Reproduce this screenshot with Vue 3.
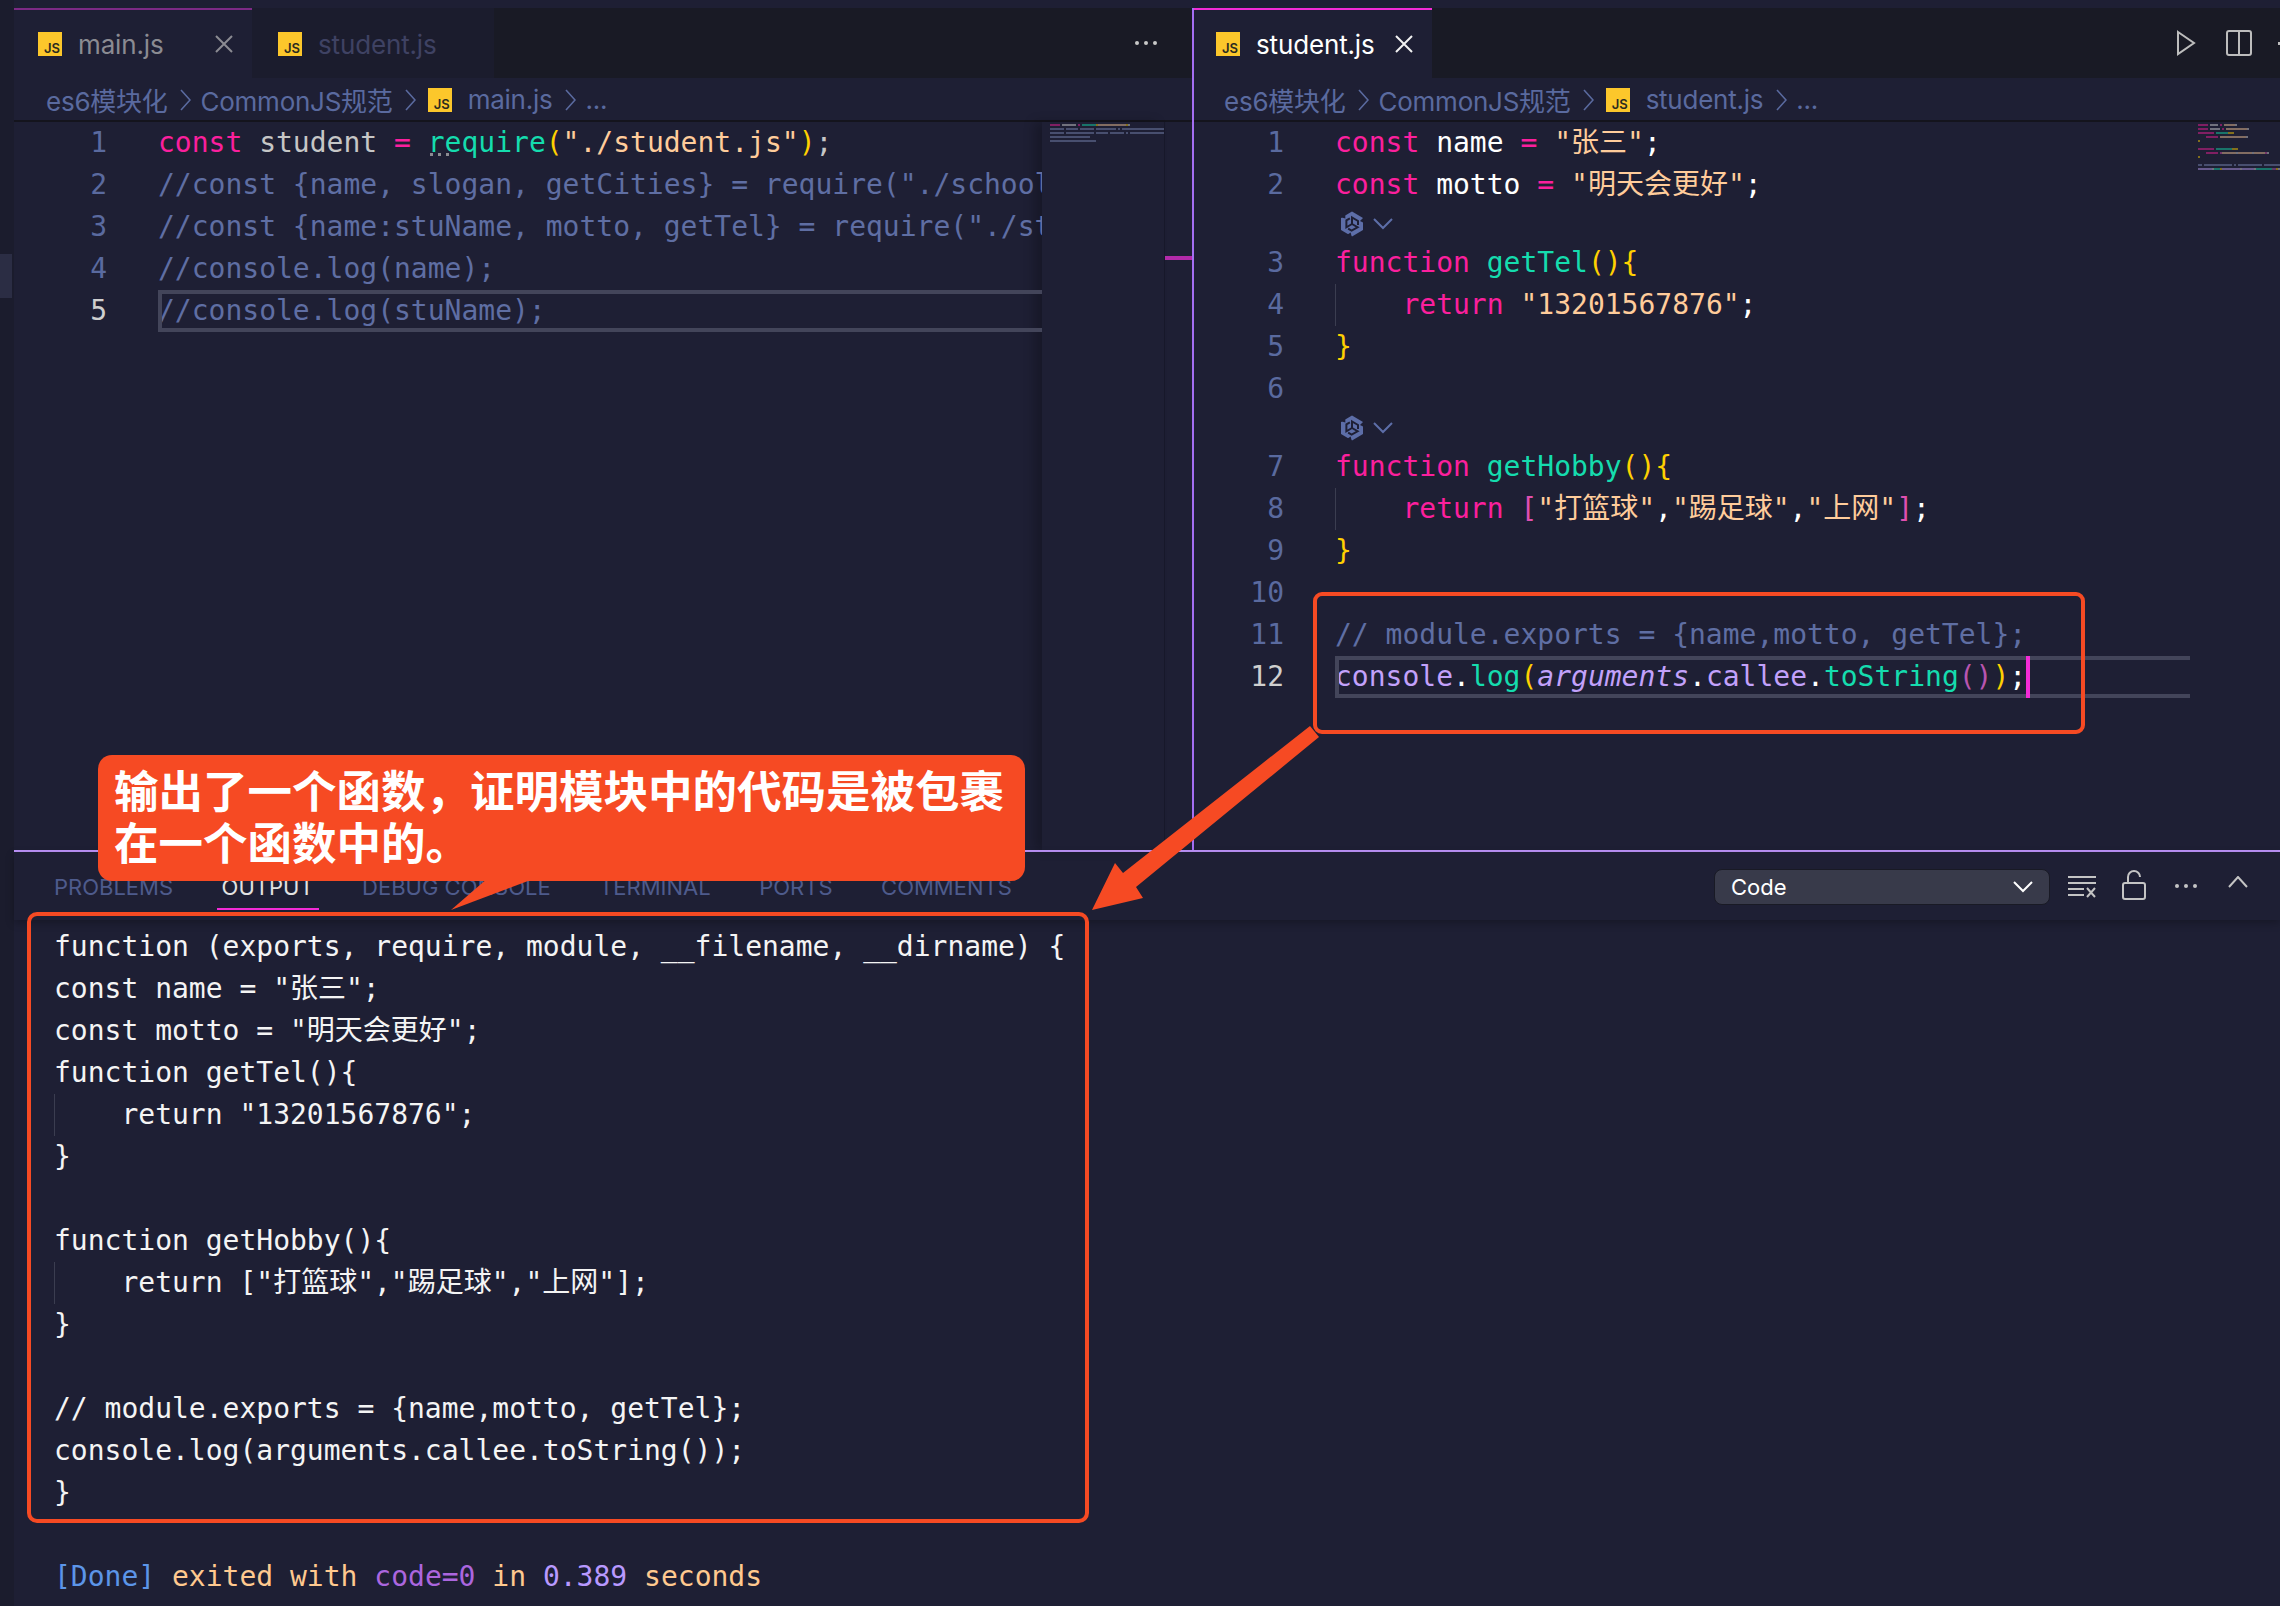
<script setup>
const L = (n, tokens, extra = {}) => ({ n, tokens, ...extra })
const lens = { lens: true }

const groups = [
  {
    key: 'left',
    tabs: [
      { name: 'main.js', state: 'dim-active', close: true },
      { name: 'student.js', state: 'inactive', close: false },
    ],
    file: 'main.js',
    lines: [
      L(1, [['kw', 'const'], ['idd', ' student '], ['kw', '='], ['idd', ' '], ['fn hint', 'require'], ['br', '('], ['str', '"./student.js"'], ['br', ')'], ['idd', ';']]),
      L(2, [['cm', '//const {name, slogan, getCities} = require("./school.js");']]),
      L(3, [['cm', '//const {name:stuName, motto, getTel} = require("./student.js");']]),
      L(4, [['cm', '//console.log(name);']]),
      L(5, [['cm', '//console.log(stuName);']], { cur: true }),
    ],
  },
  {
    key: 'right',
    tabs: [{ name: 'student.js', state: 'active', close: true }],
    file: 'student.js',
    lines: [
      L(1, [['kw', 'const'], ['id', ' name '], ['kw', '='], ['id', ' '], ['str', '"张三"'], ['id', ';']]),
      L(2, [['kw', 'const'], ['id', ' motto '], ['kw', '='], ['id', ' '], ['str', '"明天会更好"'], ['id', ';']]),
      lens,
      L(3, [['kw', 'function'], ['id', ' '], ['fn', 'getTel'], ['br', '()'], ['br', '{']]),
      L(4, [['id', '    '], ['kw', 'return'], ['id', ' '], ['str', '"13201567876"'], ['id', ';']], { guide: true }),
      L(5, [['br', '}']]),
      L(6, []),
      lens,
      L(7, [['kw', 'function'], ['id', ' '], ['fn', 'getHobby'], ['br', '()'], ['br', '{']]),
      L(8, [['id', '    '], ['kw', 'return'], ['id', ' '], ['br2', '['], ['str', '"打篮球"'], ['id', ','], ['str', '"踢足球"'], ['id', ','], ['str', '"上网"'], ['br2', ']'], ['id', ';']], { guide: true }),
      L(9, [['br', '}']]),
      L(10, []),
      L(11, [['cm', '// module.exports = {name,motto, getTel};']]),
      L(12, [['prop', 'console'], ['id', '.'], ['fn', 'log'], ['br', '('], ['prop it', 'arguments'], ['id', '.'], ['prop', 'callee'], ['id', '.'], ['fn', 'toString'], ['par', '()'], ['br', ')'], ['id', ';']], { cur: true, caret: true }),
    ],
  },
]

const bars = (tokens) =>
  tokens.flatMap(([cls, text]) =>
    text.split(/(\s+)/).filter(Boolean).map((part) => ({
      cls: /^\s+$/.test(part) ? 'gap' : cls.split(' ')[0],
      width: [...part].reduce((sum, ch) => sum + (ch.charCodeAt(0) > 255 ? 3.4 : 2), 0),
    })),
  )

const miniLines = (lines) => lines.filter((l) => !l.lens).map((l) => ({ n: l.n, bars: bars(l.tokens) }))

const outputLines = [
  { text: 'function (exports, require, module, __filename, __dirname) {' },
  { text: 'const name = "张三";' },
  { text: 'const motto = "明天会更好";' },
  { text: 'function getTel(){' },
  { text: '    return "13201567876";', guide: true },
  { text: '}' },
  { text: '' },
  { text: 'function getHobby(){' },
  { text: '    return ["打篮球","踢足球","上网"];', guide: true },
  { text: '}' },
  { text: '' },
  { text: '// module.exports = {name,motto, getTel};' },
  { text: 'console.log(arguments.callee.toString());' },
  { text: '}' },
  { text: '' },
]

const panelTabs = ['Problems', 'Output', 'Debug Console', 'Terminal', 'Ports', 'Comments']
</script>

<template>
  <div class="app">
    <aside class="activity"><span class="activity-mark"></span></aside>

    <div class="main">
      <div class="editors">
        <section v-for="g in groups" :key="g.key" class="group" :class="'group-' + g.key">
          <div class="tabbar">
            <div v-for="t in g.tabs" :key="t.name" class="tab" :class="'tab-' + t.state">
              <span class="js"><b>JS</b></span>
              <span class="tab-name">{{ t.name }}</span>
              <svg v-if="t.close" class="tab-close" viewBox="0 0 20 20" width="20" height="20">
                <path d="M2 2 18 18M18 2 2 18" fill="none" stroke="currentColor" stroke-width="2" />
              </svg>
            </div>
            <div class="tab-actions">
              <template v-if="g.key === 'left'">
                <svg viewBox="0 0 24 6" width="24" height="6"><circle cx="3" cy="3" r="2" /><circle cx="12" cy="3" r="2" /><circle cx="21" cy="3" r="2" /></svg>
              </template>
              <template v-else>
                <svg class="act-play" viewBox="0 0 20 26" width="20" height="26">
                  <path d="M2 2 18 13 2 24Z" fill="none" stroke="#bdbdbd" stroke-width="2" />
                </svg>
                <svg class="act-split" viewBox="0 0 26 26" width="26" height="26">
                  <rect x="1" y="1" width="24" height="24" rx="2" fill="none" stroke="#bdbdbd" stroke-width="2" />
                  <path d="M13 1V25" stroke="#bdbdbd" stroke-width="2" />
                </svg>
                <span class="act-cut"></span>
              </template>
            </div>
          </div>

          <div class="crumbs">
            <span>es6模块化</span>
            <svg class="chev" viewBox="0 0 11 22" width="11" height="22"><path d="M1 1 10 11 1 21" fill="none" stroke="currentColor" stroke-width="1.6" /></svg>
            <span>CommonJS规范</span>
            <svg class="chev" viewBox="0 0 11 22" width="11" height="22"><path d="M1 1 10 11 1 21" fill="none" stroke="currentColor" stroke-width="1.6" /></svg>
            <span class="js js-crumb"><b>JS</b></span>
            <span>{{ g.file }}</span>
            <svg class="chev" viewBox="0 0 11 22" width="11" height="22"><path d="M1 1 10 11 1 21" fill="none" stroke="currentColor" stroke-width="1.6" /></svg>
            <span>...</span>
          </div>

          <div class="editor">
            <div class="code-col">
              <template v-for="(line, i) in g.lines" :key="i">
                <div v-if="line.lens" class="lens-row">
                  <svg viewBox="0 0 26 26" width="26" height="26" class="lens-icon">
                    <path d="M13 0.5 24 7 24 19 13 25.5 2 19 2 7Z" fill="#5d6ea8" />
                    <g fill="none" stroke="#1e1f34" stroke-width="2">
                      <path d="M13 14V6.5L19 10V14" />
                      <path d="M13 14V6.5L19 10V14" transform="rotate(120 13 13)" />
                      <path d="M13 14V6.5L19 10V14" transform="rotate(240 13 13)" />
                    </g>
                    <g fill="#1e1f34">
                      <path d="M24.5 6.5 25 12 21 10Z" />
                      <path d="M24.5 6.5 25 12 21 10Z" transform="rotate(120 13 13)" />
                      <path d="M24.5 6.5 25 12 21 10Z" transform="rotate(240 13 13)" />
                    </g>
                  </svg>
                  <svg viewBox="0 0 20 12" width="20" height="12" class="lens-chev">
                    <path d="M1 1 10 10 19 1" fill="none" stroke="#5d6ea8" stroke-width="2" />
                  </svg>
                </div>
                <div v-else class="line" :class="{ cur: line.cur, guide: line.guide }">
                  <span class="num">{{ line.n }}</span>
                  <span class="code"><span v-for="(tok, j) in line.tokens" :key="j" :class="tok[0]">{{ tok[1] }}</span><i v-if="line.caret" class="caret"></i></span>
                </div>
              </template>
            </div>
            <div class="minimap">
              <div v-for="m in miniLines(g.lines)" :key="m.n" class="mini-line">
                <span v-for="(b, k) in m.bars" :key="k" class="mini-bar" :class="'m-' + b.cls" :style="{ width: b.width + 'px' }"></span>
              </div>
            </div>
            <div v-if="g.key === 'left'" class="scrolltrack"><span class="scrollmark"></span></div>
          </div>
        </section>
      </div>

      <section class="panel">
        <header class="panel-head">
          <div v-for="p in panelTabs" :key="p" class="ptab" :class="{ 'ptab-on': p === 'Output' }">{{ p }}</div>
          <div class="panel-actions">
            <div class="select">
              <span>Code</span>
              <svg viewBox="0 0 20 12" width="20" height="12"><path d="M1 1 10 10 19 1" fill="none" stroke="#fff" stroke-width="2" /></svg>
            </div>
            <svg class="pa-clear" viewBox="0 0 28 22" width="28" height="22">
              <path d="M0 1H28M0 7H28M0 13H16M0 19H16" stroke="#c4c4c4" stroke-width="2" />
              <path d="M19 12 27 21M27 12 19 21" stroke="#c4c4c4" stroke-width="2" />
            </svg>
            <svg class="pa-lock" viewBox="0 0 24 30" width="24" height="30">
              <rect x="1" y="13" width="22" height="16" rx="2" fill="none" stroke="#c4c4c4" stroke-width="2" />
              <path d="M6 13V7a6 6 0 0 1 12 0" fill="none" stroke="#c4c4c4" stroke-width="2" />
            </svg>
            <svg class="pa-dots" viewBox="0 0 24 6" width="24" height="6"><circle cx="3" cy="3" r="2" /><circle cx="12" cy="3" r="2" /><circle cx="21" cy="3" r="2" /></svg>
            <svg class="pa-up" viewBox="0 0 20 12" width="20" height="12"><path d="M1 11 10 1 19 11" fill="none" stroke="#c4c4c4" stroke-width="2" /></svg>
          </div>
        </header>
        <div class="output">
          <div v-for="(o, i) in outputLines" :key="i" class="out-line" :class="{ guide: o.guide }">{{ o.text }}</div>
          <div class="out-line"><span class="d-blue">[Done]</span><span class="d-peach"> exited with </span><span class="d-purple">code=0</span><span class="d-peach"> in </span><span class="d-lilac">0.389</span><span class="d-peach"> seconds</span></div>
        </div>
      </section>
    </div>

    <div class="overlay">
      <svg class="overlay-svg" viewBox="0 0 2280 1606" width="2280" height="1606">
        <rect x="1315" y="594" width="768" height="138" rx="7" fill="none" stroke="#f64a23" stroke-width="4" />
        <rect x="29" y="914" width="1058" height="607" rx="8" fill="none" stroke="#f64a23" stroke-width="4" />
        <polygon fill="#f64a23" points="1092,910 1115,863 1123,873 1310,726 1319,737 1136,887 1143,898" />
        <polygon fill="#f64a23" points="488,878 536,878 451,910" />
      </svg>
      <div class="callout">输出了一个函数，证明模块中的代码是被包裹在一个函数中的。</div>
    </div>
  </div>
</template>

<style scoped>
.app {
  position: relative;
  width: 2280px;
  height: 1606px;
  display: flex;
  overflow: hidden;
  background: #1e1f34;
  font-family: Inter, "Noto Sans CJK SC", sans-serif;
}
.activity {
  position: relative;
  width: 14px;
  flex: none;
  background: #1b1c2d;
}
.activity-mark {
  position: absolute;
  left: 0;
  top: 254px;
  width: 12px;
  height: 44px;
  background: #2b2d44;
}
.main {
  flex: 1;
  min-width: 0;
  display: flex;
  flex-direction: column;
}
.editors {
  height: 850px;
  flex: none;
  display: flex;
  padding-top: 8px;
  box-sizing: border-box;
}
.group {
  display: flex;
  flex-direction: column;
  min-width: 0;
}
.group-left {
  width: 1178px;
}
.group-right {
  flex: 1;
  border-left: 2px solid #a46ef2;
}

/* tabs */
.tabbar {
  height: 70px;
  flex: none;
  display: flex;
  background: #191a25;
}
.tab {
  display: flex;
  align-items: center;
  box-sizing: border-box;
  border-top: 2px solid transparent;
  font-size: 26px;
  letter-spacing: -0.15px;
  position: relative;
}
.tab-dim-active {
  width: 238px;
  padding-left: 24px;
  background: #1e1f34;
  border-top-color: #7d2a86;
  color: #8b8b92;
}
.tab-inactive {
  width: 242px;
  padding-left: 26px;
  background: #1b1c2d;
  color: #3f4263;
}
.tab-active {
  width: 238px;
  padding-left: 22px;
  background: #1e1f34;
  border-top-color: #f32bd6;
  color: #fff;
}
.tab-name {
  margin-left: 16px;
}
.tab-close {
  position: absolute;
  top: 24px;
}
.tab-dim-active .tab-close {
  left: 200px;
}
.tab-active .tab-close {
  left: 200px;
  color: #f2f2f2;
}
.js {
  width: 24px;
  height: 24px;
  flex: none;
  background: #fcc72b;
  display: flex;
  align-items: flex-end;
  justify-content: flex-end;
  padding: 0 2px 0 0;
  box-sizing: border-box;
  letter-spacing: 0;
}
.js b {
  font-size: 13px;
  line-height: 15px;
  font-weight: 600;
  color: #2a2a20;
}
.tab-actions {
  margin-left: auto;
  display: flex;
  align-items: center;
  fill: #c8c8c8;
}
.group-left .tab-actions {
  padding-right: 34px;
}
.act-play {
  margin-right: 30px;
}
.act-split {
  margin-right: 26px;
}
.act-cut {
  width: 2px;
  height: 3px;
  background: #bdbdbd;
}

/* breadcrumbs */
.crumbs {
  height: 44px;
  flex: none;
  box-sizing: border-box;
  border-bottom: 2px solid #14141d;
  padding-top: 1px;
  display: flex;
  align-items: center;
  font-size: 26px;
  letter-spacing: -0.25px;
  color: #5a6a9f;
  white-space: nowrap;
}
.group-left .crumbs {
  padding-left: 32px;
}
.group-right .crumbs {
  padding-left: 30px;
}
.chev {
  margin: 0 9.5px 0 12.5px;
  flex: none;
}
.js-crumb {
  margin: 0 16px 0 2px;
}

/* editor */
.editor {
  flex: 1;
  min-height: 0;
  display: flex;
  font-family: "DejaVu Sans Mono", "Noto Sans CJK SC", monospace;
  font-size: 28px;
}
.code-col {
  flex: 1;
  min-width: 0;
  overflow: hidden;
}
.line {
  position: relative;
  height: 42px;
  line-height: 42px;
  display: flex;
  white-space: pre;
}
.num {
  flex: none;
  box-sizing: border-box;
  text-align: right;
  color: #5a6a9f;
}
.group-left .num {
  width: 144px;
  padding-right: 51px;
}
.group-right .num {
  width: 141px;
  padding-right: 51px;
}
.code {
  position: relative;
  flex: 1;
  min-width: 0;
}
.line.cur .num {
  color: #cfcfcf;
}
.line.cur .code::before {
  content: "";
  position: absolute;
  inset: 0;
  box-sizing: border-box;
  border: solid #43455a;
  border-width: 4px 0 4px 4px;
}
.line.guide .code::after {
  content: "";
  position: absolute;
  left: 0;
  top: 0;
  bottom: 0;
  width: 1px;
  background: #3b3d50;
}
.lens-row {
  height: 36px;
  display: flex;
  align-items: center;
  padding-left: 145px;
}
.lens-chev {
  margin-left: 8px;
}
.kw { color: #fb1f9d; }
.id { color: #ffffff; }
.idd { color: #c6c6c6; }
.fn { color: #15dcae; }
.str { color: #ffcc9b; }
.br { color: #ffd000; }
.br2 { color: #e04fb0; }
.cm { color: #5f6ea3; }
.prop { color: #c2a1fb; }
.it { font-style: italic; }
.par { color: #b855b0; }
.hint {
  position: relative;
}
.hint::after {
  content: "";
  position: absolute;
  left: 2px;
  bottom: 3px;
  width: 21px;
  height: 3px;
  background: repeating-linear-gradient(90deg, #8b8b92 0 3px, transparent 3px 8px);
}
.caret {
  position: absolute;
  top: 0;
  width: 4px;
  height: 42px;
  background: #f32bd6;
}

/* minimap */
.minimap {
  flex: none;
  overflow: hidden;
  padding-top: 1px;
  box-sizing: border-box;
}
.group-left .minimap {
  width: 122px;
  padding-left: 8px;
  box-shadow: -8px 0 10px rgba(0, 0, 0, 0.22);
}
.group-right .minimap {
  width: 90px;
  padding-left: 8px;
}
.mini-line {
  height: 4px;
  display: flex;
  white-space: nowrap;
}
.mini-bar {
  flex: none;
  height: 2px;
  margin-top: 1px;
  opacity: 0.45;
}
.m-gap { background: transparent; }
.m-kw { background: #fb1f9d; }
.m-id, .m-idd { background: #d8d8d8; }
.m-fn { background: #15dcae; }
.m-str { background: #ffcc9b; }
.m-br { background: #ffd000; }
.m-br2 { background: #e04fb0; }
.m-cm { background: #7c8ab8; }
.m-prop { background: #c2a1fb; }
.m-par { background: #b855b0; }
.scrolltrack {
  position: relative;
  width: 28px;
  flex: none;
  border-left: 1px solid #17182a;
  box-sizing: border-box;
}
.scrollmark {
  position: absolute;
  left: 0;
  right: 0;
  top: 134px;
  height: 4px;
  background: #b32aa9;
}

/* panel */
.panel {
  flex: 1;
  min-height: 0;
  border-top: 2px solid #bd93f9;
  position: relative;
}
.panel-head {
  height: 68px;
  box-sizing: border-box;
  display: flex;
  padding-left: 35px;
  gap: 38.5px;
  font-size: 22px;
  box-shadow: 0 3px 8px rgba(0, 0, 0, 0.25);
  position: relative;
}
.ptab {
  box-sizing: border-box;
  height: 58px;
  padding: 20px 5px 0;
  line-height: 30px;
  text-transform: uppercase;
  color: #4e5b8c;
  border-bottom: 2px solid transparent;
}
.ptab-on {
  color: #e2e2e2;
  border-bottom-color: #f32bd6;
}
.panel-actions {
  margin-left: auto;
  display: flex;
  align-items: center;
  padding-right: 32px;
  padding-top: 2px;
  fill: #c4c4c4;
}
.select {
  width: 336px;
  height: 36px;
  box-sizing: border-box;
  background: #383a4a;
  border: 1px solid #191a25;
  border-radius: 8px;
  display: flex;
  align-items: center;
  justify-content: space-between;
  padding: 0 16px;
  color: #fff;
  font-size: 22px;
  margin-right: 18px;
}
.pa-lock {
  margin-left: 26px;
  margin-top: -4px;
}
.pa-dots {
  margin-left: 28px;
  margin-top: -2px;
}
.pa-up {
  margin-left: 30px;
  margin-top: -10px;
}
.output {
  padding: 6px 0 0 40px;
  font-family: "DejaVu Sans Mono", "Noto Sans CJK SC", monospace;
  font-size: 28px;
  line-height: 42px;
  color: #f4f4f4;
}
.out-line {
  position: relative;
  height: 42px;
  white-space: pre;
}
.out-line.guide::after {
  content: "";
  position: absolute;
  left: 0;
  top: 0;
  bottom: 0;
  width: 1px;
  background: #3b3d50;
}
.d-blue { color: #5c95e8; }
.d-peach { color: #ffc98f; }
.d-purple { color: #ab66df; }
.d-lilac { color: #b899ff; }

/* annotations */
.overlay {
  position: absolute;
  inset: 0;
  pointer-events: none;
}
.overlay-svg {
  position: absolute;
  left: 0;
  top: 0;
}
.callout {
  position: absolute;
  left: 98px;
  top: 755px;
  width: 927px;
  height: 126px;
  box-sizing: border-box;
  padding: 8px 14px 0 16px;
  background: #f64a23;
  border-radius: 14px;
  color: #fff;
  font-family: "Noto Sans CJK SC", sans-serif;
  font-weight: 700;
  font-size: 44.5px;
  line-height: 52px;
}
</style>

<style>
html,
body {
  margin: 0;
  background: #1e1f34;
}
</style>
